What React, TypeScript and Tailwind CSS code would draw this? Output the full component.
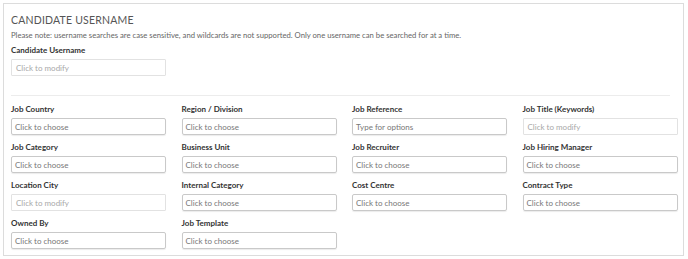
import React from "react";

type Field = { label: string; placeholder: string; kind: "choose" | "modify" | "type" };

const rows: Field[][] = [
  [
    { label: "Job Country", placeholder: "Click to choose", kind: "choose" },
    { label: "Region / Division", placeholder: "Click to choose", kind: "choose" },
    { label: "Job Reference", placeholder: "Type for options", kind: "type" },
    { label: "Job Title (Keywords)", placeholder: "Click to modify", kind: "modify" },
  ],
  [
    { label: "Job Category", placeholder: "Click to choose", kind: "choose" },
    { label: "Business Unit", placeholder: "Click to choose", kind: "choose" },
    { label: "Job Recruiter", placeholder: "Click to choose", kind: "choose" },
    { label: "Job Hiring Manager", placeholder: "Click to choose", kind: "choose" },
  ],
  [
    { label: "Location City", placeholder: "Click to modify", kind: "modify" },
    { label: "Internal Category", placeholder: "Click to choose", kind: "choose" },
    { label: "Cost Centre", placeholder: "Click to choose", kind: "choose" },
    { label: "Contract Type", placeholder: "Click to choose", kind: "choose" },
  ],
  [
    { label: "Owned By", placeholder: "Click to choose", kind: "choose" },
    { label: "Job Template", placeholder: "Click to choose", kind: "choose" },
  ],
];

function Input({ f }: { f: Field }) {
  const modify = f.kind === "modify";
  return (
    <div
      className={
        modify
          ? "h-[17px] border border-[#e2e2e2] rounded-[1px] pl-[4px] flex items-center text-[8px] text-[#a8a8a8]"
          : "h-[17px] border border-[#c9c9c9] rounded-[2px] pl-[3px] flex items-center text-[8px] text-[#777] shadow-[0_1px_1px_rgba(0,0,0,0.08)]"
      }
    >
      {f.placeholder}
    </div>
  );
}

function FieldBox({ f }: { f: Field }) {
  return (
    <div className="flex flex-col">
      <div className="text-[8px] font-bold text-[#333] leading-[10px] mb-[4px]">{f.label}</div>
      <Input f={f} />
    </div>
  );
}

export default function App() {
  return (
    <div
      className="w-[688px] h-[259px] bg-white p-[3px]"
      style={{ fontFamily: "Lato, 'Open Sans', sans-serif" }}
    >
      <div className="w-[681px] h-[253px] border border-[#dcdcdc] pl-[7px] pr-[5px]">
        <div className="mt-[10px] text-[10.5px] leading-[13px] text-[#555] tracking-[0.2px]">CANDIDATE USERNAME</div>
        <div className="mt-[3px] text-[7.7px] leading-[10px] text-[#666]">
          Please note: username searches are case sensitive, and wildcards are not supported. Only one username can be searched for at a time.
        </div>
        <div className="mt-[5px] w-[155px]">
          <FieldBox f={{ label: "Candidate Username", placeholder: "Click to modify", kind: "modify" }} />
        </div>
        <div className="mt-[19px] h-px bg-[#ececec] w-[659px]" />
        <div className="mt-[8px] grid grid-cols-[155px_155px_155px_155px] gap-x-[15.5px] gap-y-[7px]">
          {rows.map((r, i) => (
            <React.Fragment key={i}>
              {r.map((f) => (
                <FieldBox key={f.label} f={f} />
              ))}
              {r.length < 4 &&
                Array.from({ length: 4 - r.length }).map((_, j) => <div key={"e" + j} />)}
            </React.Fragment>
          ))}
        </div>
      </div>
    </div>
  );
}
